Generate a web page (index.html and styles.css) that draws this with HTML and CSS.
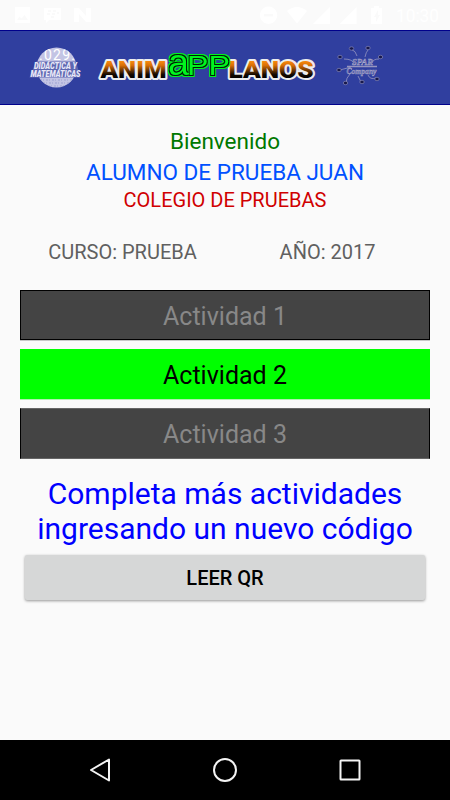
FILE: index.html
```html
<!DOCTYPE html>
<html lang="es">
<head>
<meta charset="utf-8">
<title>Animapplanos</title>
<link rel="stylesheet" href="styles.css">
</head>
<body>
<div class="status">
  <svg width="450" height="30" viewBox="0 0 450 30" fill="#fff">
    <path fill-rule="evenodd" d="M15 7h15v16h-15zM17 20h11l-3.500-5-3 3.500-2-2z"/>
    <path fill-rule="evenodd" d="M44 8h17v12h-12l-3 3v-3h-2zM48 10h3v2h-3zM53 10h3v2h-3zM47 13h3v2h-3zM52 13h3v2h-3zM57 12h2v2h-2zM51 16h3v2h-3z"/>
    <path d="M74 8h5l7 8v-8h5v14h-5l-7-8v8h-5z"/>
    <path fill-rule="evenodd" d="M268.500 6.500a8.700 8.700 0 1 0 .1 0zM264 14h9v2.500h-9z"/>
    <path d="M287 11q10-8 20 0l-10 12.500z"/>
    <path d="M330 7v17h-17zM356.500 7v17h-17z"/>
    <path fill-rule="evenodd" d="M371 8h3v-2h5v2h3v16h-11zM378 10l-4 7h2v5l4-7h-2z"/>
    <text class="clock" x="396" y="22" textLength="43" lengthAdjust="spacingAndGlyphs">10:30</text>
  </svg>
</div>
<header class="header">
  <svg width="450" height="73" viewBox="0 31 450 73">
    <defs>
      <linearGradient id="fire" gradientUnits="userSpaceOnUse" x1="0" y1="60" x2="0" y2="78">
        <stop offset="0" stop-color="#ff9010"/><stop offset=".3" stop-color="#d96f06"/><stop offset=".8" stop-color="#160a00"/><stop offset="1" stop-color="#000"/>
      </linearGradient>
      <clipPath id="disc"><circle cx="56.500" cy="67.500" r="20"/></clipPath>
      <filter id="neon" filterUnits="userSpaceOnUse" x="160" y="45" width="76" height="40" color-interpolation-filters="sRGB">
        <feMorphology in="SourceAlpha" operator="dilate" radius="2" result="wide"/>
        <feFlood flood-color="#00f51e"/>
        <feComposite in2="wide" operator="in" result="glow"/>
        <feMorphology in="SourceAlpha" operator="dilate" radius="1" result="band"/>
        <feFlood flood-color="#001c08"/>
        <feComposite in2="band" operator="in" result="dark"/>
        <feMerge><feMergeNode in="glow"/><feMergeNode in="dark"/><feMergeNode in="SourceGraphic"/></feMerge>
      </filter>
    </defs>
    <circle cx="56.500" cy="67.500" r="20" fill="#c3c4e4"/>
    <g clip-path="url(#disc)">
      <text class="num" x="39" y="59.500" textLength="36">.029.</text>
      <path d="M40 80h33M43 83h28M48 86h18" stroke="#9ca1d1" stroke-dasharray="2 1 1 2"/>
    </g>
    <path d="M36 61.500h40l4.500 16h-51z" fill="#5e67b1"/>
    <text class="math" x="34" y="69" textLength="43" lengthAdjust="spacingAndGlyphs">DIDÁCTICA Y</text>
    <text class="math" x="30.500" y="77" textLength="50" lengthAdjust="spacingAndGlyphs">MATEMÁTICAS</text>
    <g class="brand">
      <text x="100.500" y="77.500" textLength="66" lengthAdjust="spacingAndGlyphs">ANIM</text>
      <text x="228.500" y="77.500" textLength="85" lengthAdjust="spacingAndGlyphs">LANOS</text>
    </g>
    <g class="app" filter="url(#neon)">
      <text class="app-a" x="168" y="74.500" textLength="21" lengthAdjust="spacingAndGlyphs">a</text>
      <text x="187" y="74.500" textLength="43" lengthAdjust="spacingAndGlyphs">PP</text>
    </g>
    <g class="network">
      <path d="M344 59q9 0 10 5M351 49q5 2 6 7M368 50q-2 2-3 7M379 59q-6 0-7 4M340 70l11-3M346 83q0-5 4-9M361 82l-3-6M376 78q-6 2-8-3"/>
      <path d="M347 66.500h30" stroke-width="1.500"/>
    </g>
    <g fill="#17184c" stroke="#9695c0" stroke-width=".6">
      <ellipse cx="340" cy="57" rx="2.200" ry="1.700"/><ellipse cx="351.500" cy="48.500" rx="2.200" ry="1.700"/><ellipse cx="368" cy="48" rx="2.200" ry="1.700"/><ellipse cx="380.500" cy="57" rx="2.200" ry="1.700"/><ellipse cx="339" cy="70" rx="2.200" ry="1.700"/><ellipse cx="345.500" cy="83" rx="2.200" ry="1.700"/><ellipse cx="362" cy="82" rx="2.200" ry="1.700"/><ellipse cx="377" cy="79" rx="2.200" ry="1.700"/>
    </g>
    <text class="spar" x="352" y="64.500" textLength="21" lengthAdjust="spacingAndGlyphs">SPAR</text>
    <text class="spar" x="346.500" y="73.500" textLength="30" lengthAdjust="spacingAndGlyphs">Company</text>
  </svg>
</header>
<main class="content">
  <div class="welcome">Bienvenido</div>
  <div class="student">ALUMNO DE PRUEBA JUAN</div>
  <div class="school">COLEGIO DE PRUEBAS</div>
  <div class="course"><span>CURSO: PRUEBA</span><span>AÑO: 2017</span></div>
  <div class="activities">
    <div class="activity">Actividad 1</div>
    <div class="activity active">Actividad 2</div>
    <div class="activity third">Actividad 3</div>
  </div>
  <div class="prompt">Completa más actividades<br>ingresando un nuevo código</div>
  <button class="scan">LEER QR</button>
</main>
<nav class="nav">
  <svg width="450" height="60" viewBox="0 0 450 60" fill="none" stroke="#f4f4f4" stroke-width="2" stroke-linejoin="round">
    <path d="M109 19.500v21l-18-10.500z"/><circle cx="225" cy="30" r="11"/><rect x="340.500" y="20.500" width="19" height="19" rx=".5"/>
  </svg>
</nav>
</body>
</html>
```
FILE: styles.css
```css
* { box-sizing: border-box; }
body { margin: 0; width: 450px; height: 800px; overflow: hidden; display: flex; flex-direction: column; background: #fafafa; font-family: Roboto, sans-serif; }
svg { display: block; }
.status { height: 30px; }
.clock { font-size: 17.5px; font-weight: 400; }
.header { height: 75px; background: #303f9f; border-top: 1px solid #00008b; border-bottom: 1px solid #00008b; }
.num { font-size: 14px; fill: #fff; }
.math { font: italic 900 9.5px Roboto, sans-serif; fill: #e8e8f7; }
.brand { font: 900 24px Roboto, sans-serif; fill: url(#fire); stroke: #ededed; stroke-width: 4px; stroke-linejoin: round; paint-order: stroke; }
.app { font: 28px "Liberation Sans", sans-serif; fill: #00f51e; }
.app-a { font-size: 36px; }
.network { fill: none; stroke: #9695c0; stroke-width: .8; }
.spar { font: italic bold 9px "Liberation Serif", serif; fill: #7779b2; stroke: #aaa9ca; stroke-width: .4px; }
.content { flex: 1; display: flex; flex-direction: column; padding: 21px 20px 0; text-align: center; }
.welcome { height: 30px; line-height: 30px; font-size: 22.5px; color: #007800; }
.student { height: 31px; line-height: 32px; font-size: 22.5px; color: #0050ff; }
.school { height: 27px; line-height: 27px; font-size: 20px; color: #d00000; }
.course { display: grid; grid-template-columns: 1fr 1fr; height: 30px; margin-top: 23px; line-height: 31px; font-size: 20px; color: #606060; }
.activities { display: grid; gap: 9px; margin-top: 23px; }
.activity { height: 50px; line-height: 51px; font-size: 25px; background: #444; border: 1px solid #000; color: #888; box-shadow: 0 1px #c8c8c8; }
.active { background: #0f0; border-color: #0f0; color: #000; box-shadow: 0 1px #b0f0b0; }
.third { height: 51px; line-height: 52px; border-top-color: #666; border-bottom-color: #666; box-shadow: none; }
.prompt { margin-top: 17px; font-size: 30px; line-height: 35px; color: #00f; }
.scan { height: 45px; margin: 9px 5px 0; padding: 1px 0 0; border: 0; border-radius: 2px; background: #d6d7d7; box-shadow: 0 1px 3px rgba(0,0,0,.4); font: 500 20px Roboto, sans-serif; color: #000; }
.nav { height: 60px; background: #000; }
```
